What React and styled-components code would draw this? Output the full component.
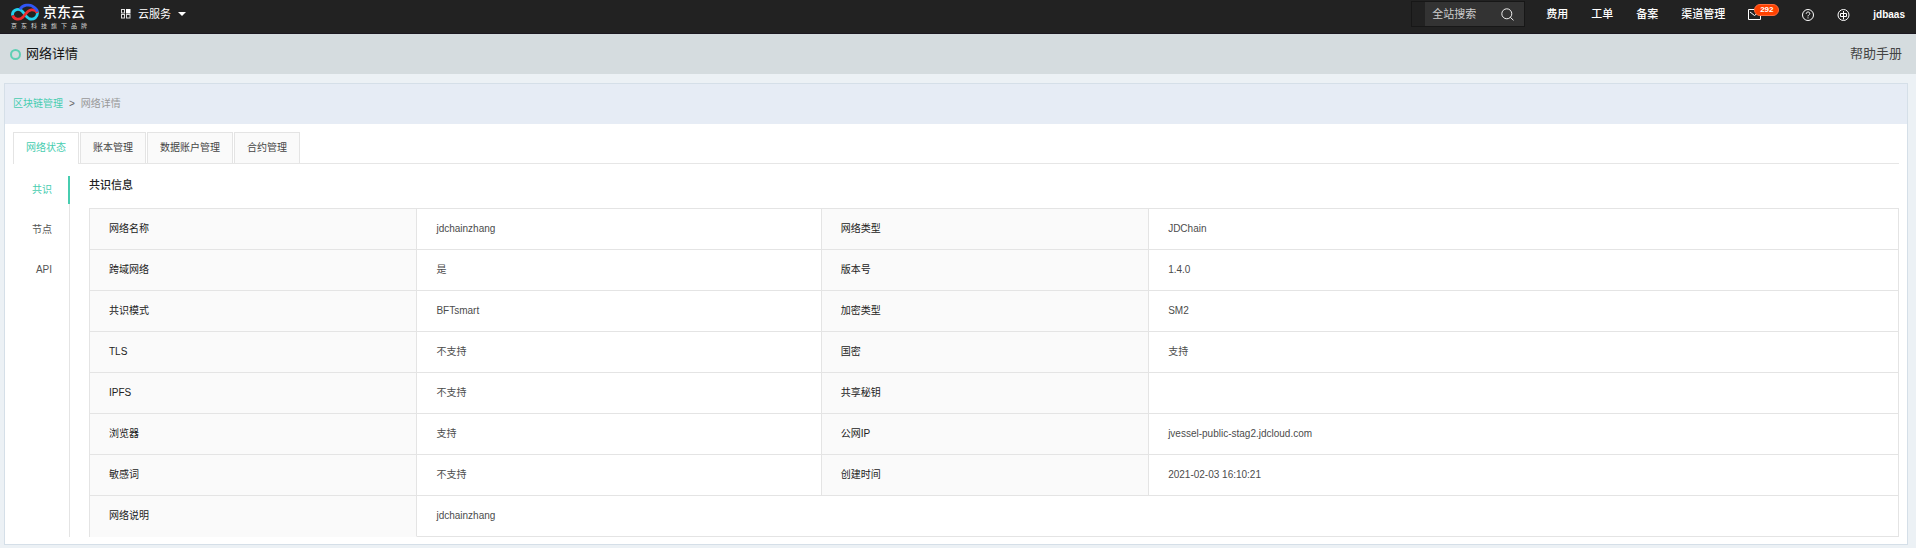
import React from "react";
import styled, { createGlobalStyle } from "styled-components";

const GlobalStyle = createGlobalStyle`
  * { box-sizing: border-box; }
  body {
    margin: 0;
    background: #ecf1f5;
    color: #4c4c4c;
    font: 10px/20px "Liberation Sans", "Noto Sans CJK SC", sans-serif;
  }
  a { color: inherit; text-decoration: none; }
  button, input { font: inherit; color: inherit; margin: 0; }
  svg { display: block; flex: none; }
`;

const TopBar = styled.header`
  display: flex;
  align-items: center;
  height: 34px;
  padding: 0 11px;
  background: #222;
  border-bottom: 1px solid #1b1820;
  color: #fff;
  font-size: 11px;
`;

const Brand = styled.a`
  width: 76px;
  margin-right: 34px;
`;

const BrandRow = styled.span`
  display: flex;
  align-items: center;
  gap: 3px;
  height: 18px;
`;

const BrandName = styled.strong`
  font-size: 14px;
  line-height: 18px;
  font-weight: 500;
`;

const Slogan = styled.small`
  display: flex;
  justify-content: space-between;
  width: 76px;
  height: 10px;
  font-size: 6px;
  line-height: 10px;
  color: #ddd;
`;

const ServiceButton = styled.button`
  display: flex;
  align-items: center;
  padding: 0;
  border: 0;
  background: none;
  line-height: 20px;
  height: 20px;
  margin-bottom: 5px;
  cursor: pointer;
  span { margin: 0 7px; }
`;

const Search = styled.form`
  display: flex;
  align-items: center;
  width: 114px;
  height: 26px;
  margin-left: auto;
  margin-bottom: 5px;
  padding-left: 13px;
  border: 1px solid #171717;
`;

const SearchInput = styled.input`
  flex: 1;
  min-width: 0;
  height: 24px;
  padding: 0 7px;
  border: 0;
  outline: 0;
  background: #333;
  &::placeholder { color: #ccc; opacity: 1; }
`;

const SearchButton = styled.button`
  height: 24px;
  padding: 0 10px 0 0;
  border: 0;
  background: #333;
`;

const TopNav = styled.nav`
  display: flex;
  align-items: center;
  gap: 23px;
  height: 20px;
  margin: 0 23px 5px 21px;
  font-weight: 500;
`;

const Tools = styled.div`
  display: flex;
  align-items: center;
  gap: 23px;
  height: 20px;
  margin-bottom: 4px;
`;

const UserLink = styled.a`
  font-size: 10px;
  font-weight: 700;
`;

const Mail = styled.a`
  position: relative;
  width: 31px;
`;

const Badge = styled.span`
  position: absolute;
  left: 6px;
  top: -5px;
  width: 25px;
  height: 12px;
  border-radius: 6px;
  border: 1px solid #ff6a3c;
  background: #ff4200;
  font-size: 8px;
  font-weight: 700;
  line-height: 10px;
  text-align: center;
`;

const TitleBar = styled.div`
  display: flex;
  align-items: center;
  height: 40px;
  padding: 0 14px 0 10px;
  background: #d5dcdf;
  font-size: 13px;
`;

const Ring = styled.span`
  width: 11px;
  height: 11px;
  margin-right: 5px;
  border: 2px solid #5fcfb4;
  border-radius: 50%;
`;

const PageTitle = styled.h1`
  margin: 0;
  font-size: 13px;
  line-height: 20px;
  font-weight: 400;
  color: #111;
`;

const HelpLink = styled.a`
  margin-left: auto;
  color: #444;
`;

const Panel = styled.main`
  margin: 9px 8px 3px 4px;
  border: 1px solid #d5dfe8;
  background: #fff;
`;

const Breadcrumb = styled.nav`
  display: flex;
  gap: 6px;
  padding: 10px 8px;
  background: #e6ecf5;
  color: #999;
  a { color: #47cdb0; }
  i { font-style: normal; color: #666; }
`;

const Tabs = styled.div`
  display: flex;
  gap: 1px;
  margin: 8px 8px 0;
  border-bottom: 1px solid #e6e6e6;
`;

const Tab = styled.button`
  height: ${(p) => (p.$active ? "32px" : "31px")};
  margin-bottom: ${(p) => (p.$active ? "-1px" : "0")};
  padding: 0 12px ${(p) => (p.$active ? "1px" : "0")};
  border: 1px solid #e4e4e4;
  border-bottom: 0;
  background: ${(p) => (p.$active ? "#fff" : "#fafafa")};
  color: ${(p) => (p.$active ? "#47cdb0" : "#444")};
`;

const Body = styled.div`
  display: flex;
  padding: 12px 8px 7px;
`;

const SideNav = styled.nav`
  display: flex;
  flex-direction: column;
  gap: 12px;
  width: 57px;
  margin-right: 19px;
  border-right: 1px solid #e4e4e4;
`;

const SideLink = styled.a`
  margin-right: -1px;
  padding: 4px 16px 4px 0;
  border-right: 2px solid ${(p) => (p.$active ? "#47cdb0" : "transparent")};
  color: ${(p) => (p.$active ? "#47cdb0" : "#555")};
  text-align: right;
`;

const Section = styled.section`
  flex: 1;
  min-width: 0;
`;

const SectionTitle = styled.h2`
  margin: 0 0 13px;
  font-size: 11px;
  line-height: 19px;
  font-weight: 500;
  color: #222;
`;

const InfoTable = styled.table`
  width: 100%;
  table-layout: fixed;
  border-collapse: separate;
  border-spacing: 0;
  border-top: 1px solid #e4e4e4;
  border-left: 1px solid #e4e4e4;
`;

const LabelCell = styled.th`
  padding: 10px 19px;
  border-right: 1px solid #e4e4e4;
  border-bottom: 1px solid ${(p) => (p.$last ? "#fafafa" : "#e4e4e4")};
  background: #fafafa;
  color: #222;
  font-weight: 400;
  text-align: left;
`;

const ValueCell = styled.td`
  padding: 10px 19px;
  border-right: 1px solid #e4e4e4;
  border-bottom: 1px solid #e4e4e4;
`;

const LabelCol = styled.col`
  width: 18.1%;
`;

const ValueCol = styled.col`
  width: 22.35%;
`;

const rows = [
  ["网络名称", "jdchainzhang", "网络类型", "JDChain"],
  ["跨域网络", "是", "版本号", "1.4.0"],
  ["共识模式", "BFTsmart", "加密类型", "SM2"],
  ["TLS", "不支持", "国密", "支持"],
  ["IPFS", "不支持", "共享秘钥", ""],
  ["浏览器", "支持", "公网IP", "jvessel-public-stag2.jdcloud.com"],
  ["敏感词", "不支持", "创建时间", "2021-02-03 16:10:21"],
];

const Logo = () => (
  <svg width="29" height="18" viewBox="0 0 29 18" fill="none" strokeWidth="2.8">
    <path d="M1.6 12.5C0.8 8 6 4.6 10.5 7.6C13.5 9.8 14.5 14 18 15.6C22.5 17.4 27.4 14 26.3 8.5" stroke="#21d0ee" />
    <path d="M1.8 12.5C3 16.6 8.5 17.4 11.8 14.2C15 11 16 7.2 20.5 6.8C23.5 6.6 25.5 8 26.3 10" stroke="#ee2b2e" />
    <path d="M8.8 6.2C12 1.6 18.5 1.2 21.5 3.2C24 4.6 26 6.4 26.5 8.6" stroke="#3056f5" />
  </svg>
);

const GridIcon = () => (
  <svg width="10" height="10" viewBox="0 0 10 10" fill="none" stroke="#ddd">
    <rect x="0.5" y="0.5" width="3" height="3.5" />
    <rect x="5" y="0" width="4.5" height="4.5" fill="#fff" stroke="none" />
    <rect x="0.5" y="5.5" width="3" height="3.5" />
    <rect x="5.5" y="5.5" width="3.5" height="3.5" />
  </svg>
);

const Caret = () => (
  <svg width="8" height="4" viewBox="0 0 8 4" fill="#fff">
    <path d="M0 0h8L4 4z" />
  </svg>
);

const SearchIcon = () => (
  <svg width="13" height="13" viewBox="0 0 13 13" fill="none" stroke="#eee">
    <circle cx="5.8" cy="5.8" r="5" />
    <path d="M9.3 9.3l3.2 3" />
  </svg>
);

const MailIcon = () => (
  <svg width="13" height="11" viewBox="0 0 13 11" fill="none" stroke="#fff">
    <path d="M0.5 0.5h12v10H0.5zM2 3l4.5 3.5L11 3" />
  </svg>
);

const HelpIcon = () => (
  <svg width="12" height="12" viewBox="0 0 12 12" fill="none" stroke="#fff">
    <circle cx="6" cy="6" r="5.5" />
    <path d="M4.2 4.8C4.2 2.3 8 2.5 7.8 4.7C7.7 5.8 6 6 6 7.4M6 8.4v1" />
  </svg>
);

const LanguageIcon = () => (
  <svg width="13" height="12" viewBox="0 0 13 12" fill="none" stroke="#fff">
    <circle cx="6.5" cy="6" r="5.5" />
    <path d="M3.5 4.5h6v3h-6zM6.5 2v8.5" />
  </svg>
);

export default function App() {
  return (
    <>
      <GlobalStyle />
      <TopBar>
        <Brand href="#">
          <BrandRow>
            <Logo />
            <BrandName>京东云</BrandName>
          </BrandRow>
          <Slogan>
            {[..."京东科技旗下品牌"].map((c) => (
              <span key={c}>{c}</span>
            ))}
          </Slogan>
        </Brand>
        <ServiceButton type="button">
          <GridIcon />
          <span>云服务</span>
          <Caret />
        </ServiceButton>
        <Search>
          <SearchInput aria-label="全站搜索" placeholder="全站搜索" />
          <SearchButton type="button" aria-label="搜索">
            <SearchIcon />
          </SearchButton>
        </Search>
        <TopNav>
          <a href="#">费用</a>
          <a href="#">工单</a>
          <a href="#">备案</a>
          <a href="#">渠道管理</a>
        </TopNav>
        <Tools>
          <Mail href="#">
            <MailIcon />
            <Badge>292</Badge>
          </Mail>
          <a href="#" aria-label="帮助"><HelpIcon /></a>
          <a href="#" aria-label="语言"><LanguageIcon /></a>
          <UserLink href="#">jdbaas</UserLink>
        </Tools>
      </TopBar>
      <TitleBar>
        <Ring />
        <PageTitle>网络详情</PageTitle>
        <HelpLink href="#">帮助手册</HelpLink>
      </TitleBar>
      <Panel>
        <Breadcrumb>
          <a href="#">区块链管理</a>
          <i>&gt;</i>
          <span>网络详情</span>
        </Breadcrumb>
        <Tabs role="tablist">
          {["网络状态", "账本管理", "数据账户管理", "合约管理"].map((t, i) => (
            <Tab key={t} type="button" role="tab" aria-selected={i === 0} $active={i === 0}>
              {t}
            </Tab>
          ))}
        </Tabs>
        <Body>
          <SideNav>
            {["共识", "节点", "API"].map((t, i) => (
              <SideLink key={t} href="#" $active={i === 0}>
                {t}
              </SideLink>
            ))}
          </SideNav>
          <Section>
            <SectionTitle>共识信息</SectionTitle>
            <InfoTable>
              <colgroup>
                <LabelCol />
                <ValueCol />
                <LabelCol />
                <col />
              </colgroup>
              <tbody>
                {rows.map(([l1, v1, l2, v2]) => (
                  <tr key={l1}>
                    <LabelCell scope="row">{l1}</LabelCell>
                    <ValueCell>{v1}</ValueCell>
                    <LabelCell scope="row">{l2}</LabelCell>
                    <ValueCell>{v2}</ValueCell>
                  </tr>
                ))}
                <tr>
                  <LabelCell scope="row" $last>网络说明</LabelCell>
                  <ValueCell colSpan={3}>jdchainzhang</ValueCell>
                </tr>
              </tbody>
            </InfoTable>
          </Section>
        </Body>
      </Panel>
    </>
  );
}
